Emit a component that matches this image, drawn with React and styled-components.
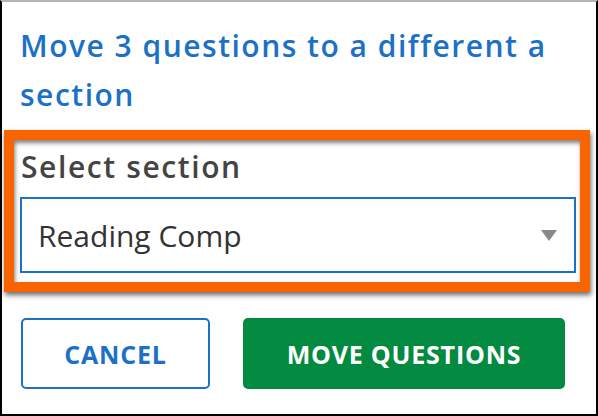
import React from 'react';
import styled, { createGlobalStyle } from 'styled-components';

const GlobalStyle = createGlobalStyle`
  html, body {
    margin: 0;
    padding: 0;
    background: #fff;
  }
  body {
    font-family: "Open Sans", Lato, Arial, sans-serif;
  }
`

const Frame = styled.div`
  width: 598px;
  height: 416px;
  box-sizing: border-box;
  border-top: 2px solid #b4b4b4;
  border-left: 2px solid #000;
  border-right: 2px solid #000;
  border-bottom: 2px solid #000;
  background: #fff;
  padding: 19px 0 0 2px;
  overflow: hidden;
`

const Title = styled.h2`
  width: 560px;
  margin: 0 0 11px 16px;
  color: #1c71c7;
  font-size: 30px;
  font-weight: 600;
  letter-spacing: 1.5px;
  line-height: 49px;
`

const Highlight = styled.div`
  width: 586px;
  box-sizing: border-box;
  border: 10px solid #f86500;
  padding: 9px 4px 9px 6px;
  box-shadow: 1px 3px 5px rgba(0, 0, 0, 0.6), inset 1px 3px 4px rgba(0, 0, 0, 0.5);
`

const Label = styled.div`
  color: #444;
  font-size: 30px;
  font-weight: 600;
  letter-spacing: 1.6px;
  line-height: 36px;
  margin: 0 0 12px 1px;
`

const Select = styled.div`
  height: 76px;
  box-sizing: border-box;
  border: 2px solid #1c71c7;
  display: flex;
  align-items: center;
  justify-content: space-between;
  padding: 0 17px 0 16px;
  color: #333;
  font-size: 30px;
  letter-spacing: 0;
`

const Caret = styled.span`
  width: 0;
  height: 0;
  border-left: 8px solid transparent;
  border-right: 8px solid transparent;
  border-top: 11px solid #888;
`

const Buttons = styled.div`
  display: flex;
  gap: 33px;
  margin: 26px 0 0 17px;
`

const Button = styled.button`
  width: ${props => props.primary ? '322px' : '189px'};
  height: 71px;
  box-sizing: border-box;
  border-radius: 5px;
  border: 2px solid ${props => props.primary ? '#028a40' : '#1c71c7'};
  background: ${props => props.primary ? '#028a40' : '#fff'};
  color: ${props => props.primary ? '#fff' : '#1c71c7'};
  font-family: "Open Sans", Lato, Arial, sans-serif;
  font-size: 25px;
  font-weight: 700;
  letter-spacing: 0.8px;
  padding: 0;
`

export default function App() {
  return (
    <Frame>
      <GlobalStyle />
      <Title>Move 3 questions to a different a section</Title>
      <Highlight>
        <Label>Select section</Label>
        <Select>
          Reading Comp
          <Caret />
        </Select>
      </Highlight>
      <Buttons>
        <Button type="button">CANCEL</Button>
        <Button primary type="button">MOVE QUESTIONS</Button>
      </Buttons>
    </Frame>
  )
}
